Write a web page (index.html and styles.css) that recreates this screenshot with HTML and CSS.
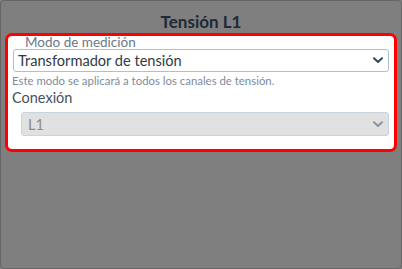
FILE: index.html
```html
<!DOCTYPE html>
<html lang="es">
<head>
<meta charset="utf-8">
<link rel="stylesheet" href="styles.css">
</head>
<body>
<div class="frame">
  <h1 class="title">Tensión L1</h1>
  <div class="card">
    <div class="label-top">Modo de medición</div>
    <div class="select">
      <span>Transformador de tensión</span>
      <svg class="chev" width="10" height="7" viewBox="0 0 10 7"><path d="M1 1.2 L5 5 L9 1.2" fill="none" stroke="#34495e" stroke-width="2" stroke-linecap="round" stroke-linejoin="round"/></svg>
    </div>
    <div class="help">Este modo se aplicará a todos los canales de tensión.</div>
    <div class="label">Conexión</div>
    <div class="select disabled">
      <span>L1</span>
      <svg class="chev" width="10" height="7" viewBox="0 0 10 7"><path d="M1 1.2 L5 5 L9 1.2" fill="none" stroke="#8896a4" stroke-width="2" stroke-linecap="round" stroke-linejoin="round"/></svg>
    </div>
  </div>
</div>
</body>
</html>
```
FILE: styles.css
```css
html, body { margin: 0; padding: 0; }
body {
  width: 402px;
  height: 269px;
  font-family: "Lato", "Open Sans", sans-serif;
  background: #808080;
}
.frame {
  box-sizing: border-box;
  width: 402px;
  height: 269px;
  background: #7f7f7f;
  border: 1px solid #656565;
  border-radius: 4px;
  padding: 0 4px;
}
.title {
  margin: 0;
  padding-top: 10px;
  height: 22px;
  text-align: center;
  font-size: 17px;
  line-height: 22px;
  font-weight: 700;
  color: #1e2a36;
}
.card {
  box-sizing: border-box;
  height: 119px;
  background: #fff;
  border: 3px solid #ff0000;
  border-radius: 7px;
  padding: 0 4px 0 4px;
}
.label-top {
  padding-left: 13px;
  font-size: 13.5px;
  line-height: 13px;
  height: 13px;
  color: #6b7886;
}
.select {
  box-sizing: border-box;
  height: 23px;
  margin: 0 1px 0 1px;
  border: 1px solid #aebfd0;
  border-radius: 3px;
  display: flex;
  align-items: center;
  justify-content: space-between;
  padding: 0 5px 0 4px;
  font-size: 14.6px;
  color: #2e3b48;
}
.chev { display: block; }
.help {
  margin-top: 2px;
  font-size: 11.4px;
  line-height: 13px;
  color: #7d8c9b;
}
.label {
  margin-top: 2px;
  font-size: 14.5px;
  line-height: 18px;
  color: #46525f;
}
.select.disabled {
  margin: 5px 1px 0 9px;
  height: 24px;
  background: #e1e1e1;
  border-color: #c9d3dd;
  color: #8b8b8b;
  padding-left: 6px;
}
```
